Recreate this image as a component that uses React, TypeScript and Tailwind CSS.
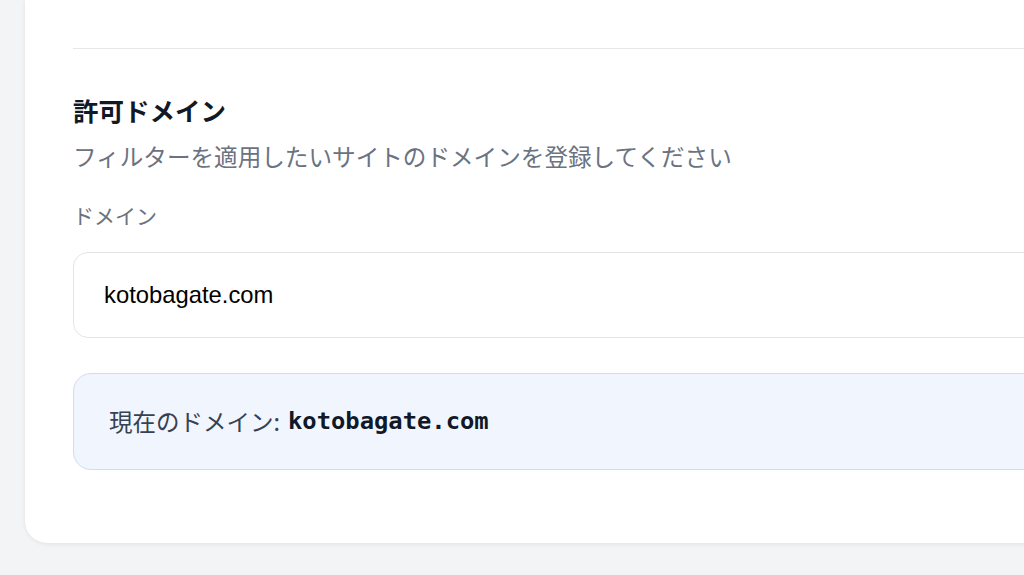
export default function App() {
  return (
    <div
      className="h-[575px] w-full overflow-hidden bg-[#f3f4f6]"
      style={{ fontFamily: '"Noto Sans CJK JP", "Noto Sans", sans-serif' }}
    >
      {/* Settings card — top and right edge run off the viewport */}
      <div className="ml-[25px] w-[1100px] rounded-b-[22px] bg-white px-[48px] pt-[48px] pb-[73px] shadow-[0_1px_4px_rgba(0,0,0,0.08)]">
        <div className="border-t border-[#e5e7eb]" />

        <section className="mt-[43px]">
          <h2 className="text-[25.5px] font-bold leading-[36px] text-[#111827]">許可ドメイン</h2>
          <p className="mt-[12px] text-[23.6px] leading-[32px] text-[#6b7280]">
            フィルターを適用したいサイトのドメインを登録してください
          </p>

          <label className="mt-[29px] block text-[21px] leading-[28px] text-[#6b7280]">ドメイン</label>
          <input
            type="text"
            defaultValue="kotobagate.com"
            className="mt-[23px] block h-[86px] w-full rounded-[15px] border border-[#e2e4e8] bg-white px-[30px] text-[23.8px] text-black outline-none"
            style={{ fontFamily: '"Liberation Sans", Arial, sans-serif' }}
          />

          <div className="mt-[35px] flex h-[97px] items-center rounded-[18px] border border-[#d3ddea] bg-[#f0f5fe] px-[35px] text-[23.5px] text-[#374151]">
            <span>現在のドメイン:</span>
            <span
              className="ml-[8px] font-bold text-[#111827]"
              style={{ fontFamily: '"DejaVu Sans Mono", "Liberation Mono", monospace', fontSize: "23.8px" }}
            >
              kotobagate.com
            </span>
          </div>
        </section>
      </div>
    </div>
  );
}
